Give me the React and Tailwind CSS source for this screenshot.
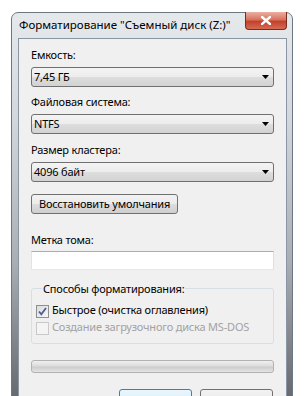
export default function App() {
  const Combo = ({ value }) => (
    <div className="h-[20px] rounded-[3px] border border-[#707070] bg-[linear-gradient(to_bottom,#f4f4f4_0%,#ececec_50%,#dedede_50%,#d2d2d2_100%)] flex items-center justify-between pl-[2px] pr-[4px]">
      <span className="text-[11px] tracking-[-0.2px] leading-[16px] text-black">{value}</span>
      <svg width="7" height="4" viewBox="0 0 7 4"><path d="M0 0h7L3.5 4z" fill="#000" /></svg>
    </div>
  );
  const Label = ({ children, className }) => (
    <div className={"text-[11px] tracking-[-0.2px] leading-[16px] text-black whitespace-nowrap " + (className || "")}>{children}</div>
  );
  return (
    <div
      className="w-[304px] h-[396px] bg-white overflow-hidden"
      style={{ fontFamily: '"Noto Sans", "Open Sans", sans-serif' }}
    >
      <div className="ml-[11px] mt-[12px] w-[282px] h-[420px] rounded-t-[7px] border border-[#6d7782] bg-[linear-gradient(to_bottom,#e6e9ec_0%,#d3d8dd_25%,#a9aeb3_60%,#55585c_100%)] flex flex-col">
        <div className="h-[25px] flex items-start justify-between pl-[7px] shrink-0">
          <div className="pt-[4px] text-[11.5px] leading-[16px] text-black whitespace-nowrap">
            Форматирование "Съемный диск (Z:)"
          </div>
          <div className="-mt-[1px] mr-[5px] w-[42px] h-[18px] rounded-b-[4px] border border-[#7a2a1e] border-t-0 bg-[linear-gradient(to_bottom,#eab0a2_0%,#d9735e_45%,#c2412b_55%,#d66a52_100%)] flex items-center justify-center">
            <svg width="10" height="9" viewBox="0 0 10 9">
              <path d="M1 1l8 7M9 1L1 8" stroke="#fff" strokeWidth="2.4" strokeLinecap="square" />
            </svg>
          </div>
        </div>
        <div className="ml-[6px] mr-[5px] flex-1 bg-[#f0f0f0] border border-[#8a96a3] px-[12px] pt-[8px] flex flex-col">
          <Label>Емкость:</Label>
          <div className="mt-[4px]"><Combo value="7,45 ГБ" /></div>
          <Label className="mt-[7px]">Файловая система:</Label>
          <div className="mt-[4px]"><Combo value="NTFS" /></div>
          <Label className="mt-[8px]">Размер кластера:</Label>
          <div className="mt-[4px]"><Combo value="4096 байт" /></div>
          <div className="mt-[12px] w-[147px] h-[20px] rounded-[3px] border border-[#707070] bg-[linear-gradient(to_bottom,#f2f2f2_0%,#ebebeb_50%,#dddddd_50%,#cfcfcf_100%)] flex items-center justify-center text-[11px] tracking-[-0.2px] leading-[16px] text-black whitespace-nowrap">
            Восстановить умолчания
          </div>
          <Label className="mt-[18px]">Метка тома:</Label>
          <div className="mt-[3px] h-[19px] bg-white border border-[#abadb3] border-l-[#e2e3ea] border-r-[#dbdfe6] border-b-[#e3e9ef]" />
          <div className="mt-[18px] h-[56px] rounded-[3px] border border-[#d5dfe5] flex flex-col pl-[4px]">
            <div className="-mt-[8px] ml-[6px] self-start px-[1px] bg-[#f0f0f0] text-[11px] tracking-[-0.2px] leading-[16px] text-black whitespace-nowrap">
              Способы форматирования:
            </div>
            <div className="mt-[5px] h-[16px] flex items-start">
              <div className="mt-[3px] w-[13px] h-[13px] border border-[#8e8f8f] bg-[linear-gradient(135deg,#dcdcdc,#f6f6f6)] flex items-center justify-center shrink-0">
                <svg width="9" height="9" viewBox="0 0 9 9">
                  <path d="M1 4.5l2.3 2.8L8 1" stroke="#4a5f97" strokeWidth="1.8" fill="none" />
                </svg>
              </div>
              <span className="ml-[3px] text-[11px] tracking-[-0.2px] leading-[16px] text-black whitespace-nowrap">Быстрое (очистка оглавления)</span>
            </div>
            <div className="mt-[1px] h-[16px] flex items-start">
              <div className="mt-[3px] w-[13px] h-[13px] border border-[#c9c9c9] bg-[#f4f4f4] shrink-0" />
              <span className="ml-[3px] text-[11px] tracking-[-0.2px] leading-[16px] text-[#a2a2a2] whitespace-nowrap">Создание загрузочного диска MS-DOS</span>
            </div>
          </div>
          <div className="mt-[16px] h-[13px] rounded-[3px] border border-[#b2b2b2] bg-[linear-gradient(to_bottom,#f0f0f0_0%,#dcdcdc_45%,#cdcdcd_55%,#e4e4e4_100%)]" />
          <div className="mt-[16px] mr-[1px] flex justify-end gap-[8px]">
            <div className="w-[73px] h-[23px] rounded-[3px] border border-[#3c7fb1] bg-[linear-gradient(to_bottom,#eaf6fd_0%,#d9f0fc_50%,#bee6fd_50%,#a7d9f5_100%)]" />
            <div className="w-[73px] h-[23px] rounded-[3px] border border-[#707070] bg-[linear-gradient(to_bottom,#f2f2f2_0%,#ebebeb_50%,#dddddd_50%,#cfcfcf_100%)]" />
          </div>
        </div>
      </div>
    </div>
  );
}
